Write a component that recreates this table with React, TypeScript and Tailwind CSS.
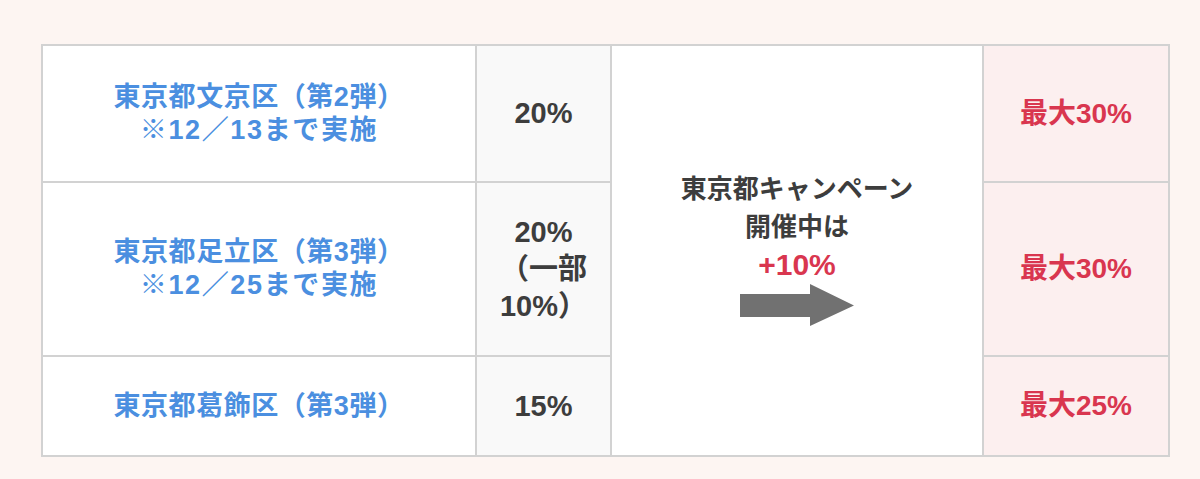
import React from 'react';

const font = { fontFamily: '"Liberation Sans", "Noto Sans CJK JP", sans-serif' };

const rows = [
  { area: ['東京都文京区（第2弾）', '※12／13まで実施'], rate: '20%', max: '最大30%', h: 'h-[137px]' },
  { area: ['東京都足立区（第3弾）', '※12／25まで実施'], rate: '20%（一部10%）', max: '最大30%', h: 'h-[174px]' },
  { area: ['東京都葛飾区（第3弾）'], rate: '15%', max: '最大25%', h: 'h-[100px]' },
];

const App: React.FC = () => {
  return (
    <div className="w-[1200px] h-[479px] bg-[#fdf5f2] pt-[44px] pl-[41px]" style={font}>
      <table className="border-collapse table-fixed w-[1127px] border-2 border-[#d2d2d2]">
        <colgroup>
          <col className="w-[434px]" />
          <col className="w-[135px]" />
          <col className="w-[372px]" />
          <col className="w-[186px]" />
        </colgroup>
        <tbody>
          {rows.map((r, i) => (
            <tr key={i} className={r.h}>
              <td className="border-2 border-[#d2d2d2] bg-white text-center align-middle px-2 text-[27px] font-bold leading-[33px] tracking-[0.02em] text-[#4b8fe0]">
                {r.area.map((t, j) => (
                  <div key={j} className={j === 1 ? 'tracking-[0.06em]' : ''}>{t}</div>
                ))}
              </td>
              <td className="border-2 border-[#d2d2d2] bg-[#f9f9f9] text-center align-middle px-[20px] text-[29px] font-semibold leading-[37px] text-[#3d3d3d]">
                {r.rate}
              </td>
              {i === 0 && (
                <td rowSpan={3} className="border-2 border-[#d2d2d2] bg-white text-center align-middle">
                  <div className="flex flex-col items-center pb-[4px]">
                    <div className="text-[26px] font-bold leading-[38px] text-[#3d3d3d]">東京都キャンペーン</div>
                    <div className="text-[26px] font-bold leading-[38px] text-[#3d3d3d]">開催中は</div>
                    <div className="text-[30px] font-semibold leading-[38px] text-[#d9364f]">+10%</div>
                    <svg width="115" height="43" viewBox="0 0 115 43" className="ml-[1px]">
                      <polygon points="0,10 70,10 70,0 114,21.5 70,42 70,33 0,33" fill="#717171" />
                    </svg>
                  </div>
                </td>
              )}
              <td className="border-2 border-[#d2d2d2] bg-[#fcefef] text-center align-middle text-[28px] font-bold text-[#d9364f]">
                {r.max}
              </td>
            </tr>
          ))}
        </tbody>
      </table>
    </div>
  );
};

export default App;
